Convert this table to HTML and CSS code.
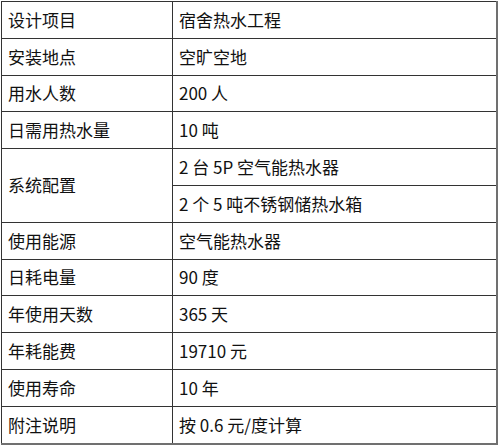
FILE: index.html
```html
<!DOCTYPE html>
<html lang="zh-CN">
<head>
<meta charset="utf-8">
<link rel="stylesheet" href="styles.css">
</head>
<body>
<table class="spec">
  <tr><td class="k">设计项目</td><td class="v">宿舍热水工程</td></tr>
  <tr><td class="k">安装地点</td><td class="v">空旷空地</td></tr>
  <tr><td class="k">用水人数</td><td class="v">200 人</td></tr>
  <tr><td class="k">日需用热水量</td><td class="v">10 吨</td></tr>
  <tr><td class="k" rowspan="2">系统配置</td><td class="v">2 台 5P 空气能热水器</td></tr>
  <tr><td class="v">2 个 5 吨不锈钢储热水箱</td></tr>
  <tr><td class="k">使用能源</td><td class="v">空气能热水器</td></tr>
  <tr><td class="k">日耗电量</td><td class="v">90 度</td></tr>
  <tr><td class="k">年使用天数</td><td class="v">365 天</td></tr>
  <tr><td class="k">年耗能费</td><td class="v">19710 元</td></tr>
  <tr><td class="k">使用寿命</td><td class="v">10 年</td></tr>
  <tr><td class="k">附注说明</td><td class="v">按 0.6 元/度计算</td></tr>
</table>
</body>
</html>
```
FILE: styles.css
```css
html, body {
  margin: 0;
  padding: 0;
  background: #ffffff;
}
body {
  padding: 1px 0 0 1px;
  font-family: "Noto Sans CJK SC", "Noto Sans", sans-serif;
  font-size: 17px;
  color: #111;
}
.spec {
  border-collapse: collapse;
  width: 497px;
  table-layout: fixed;
  border-top: 1px solid #333;
  border-left: 1px solid #333;
  border-right: 2px solid #707070;
  border-bottom: 2px solid #707070;
}
.spec td {
  border: 1px solid #333;
  height: 35.8px;
  padding: 0 6px;
  line-height: 20px;
  vertical-align: middle;
  white-space: nowrap;
}
.spec td.k {
  width: 158px;
}
.spec tr td:last-child {
  border-right: 2px solid #707070;
}
.spec tr:last-child td {
  border-bottom: 2px solid #707070;
}
```
